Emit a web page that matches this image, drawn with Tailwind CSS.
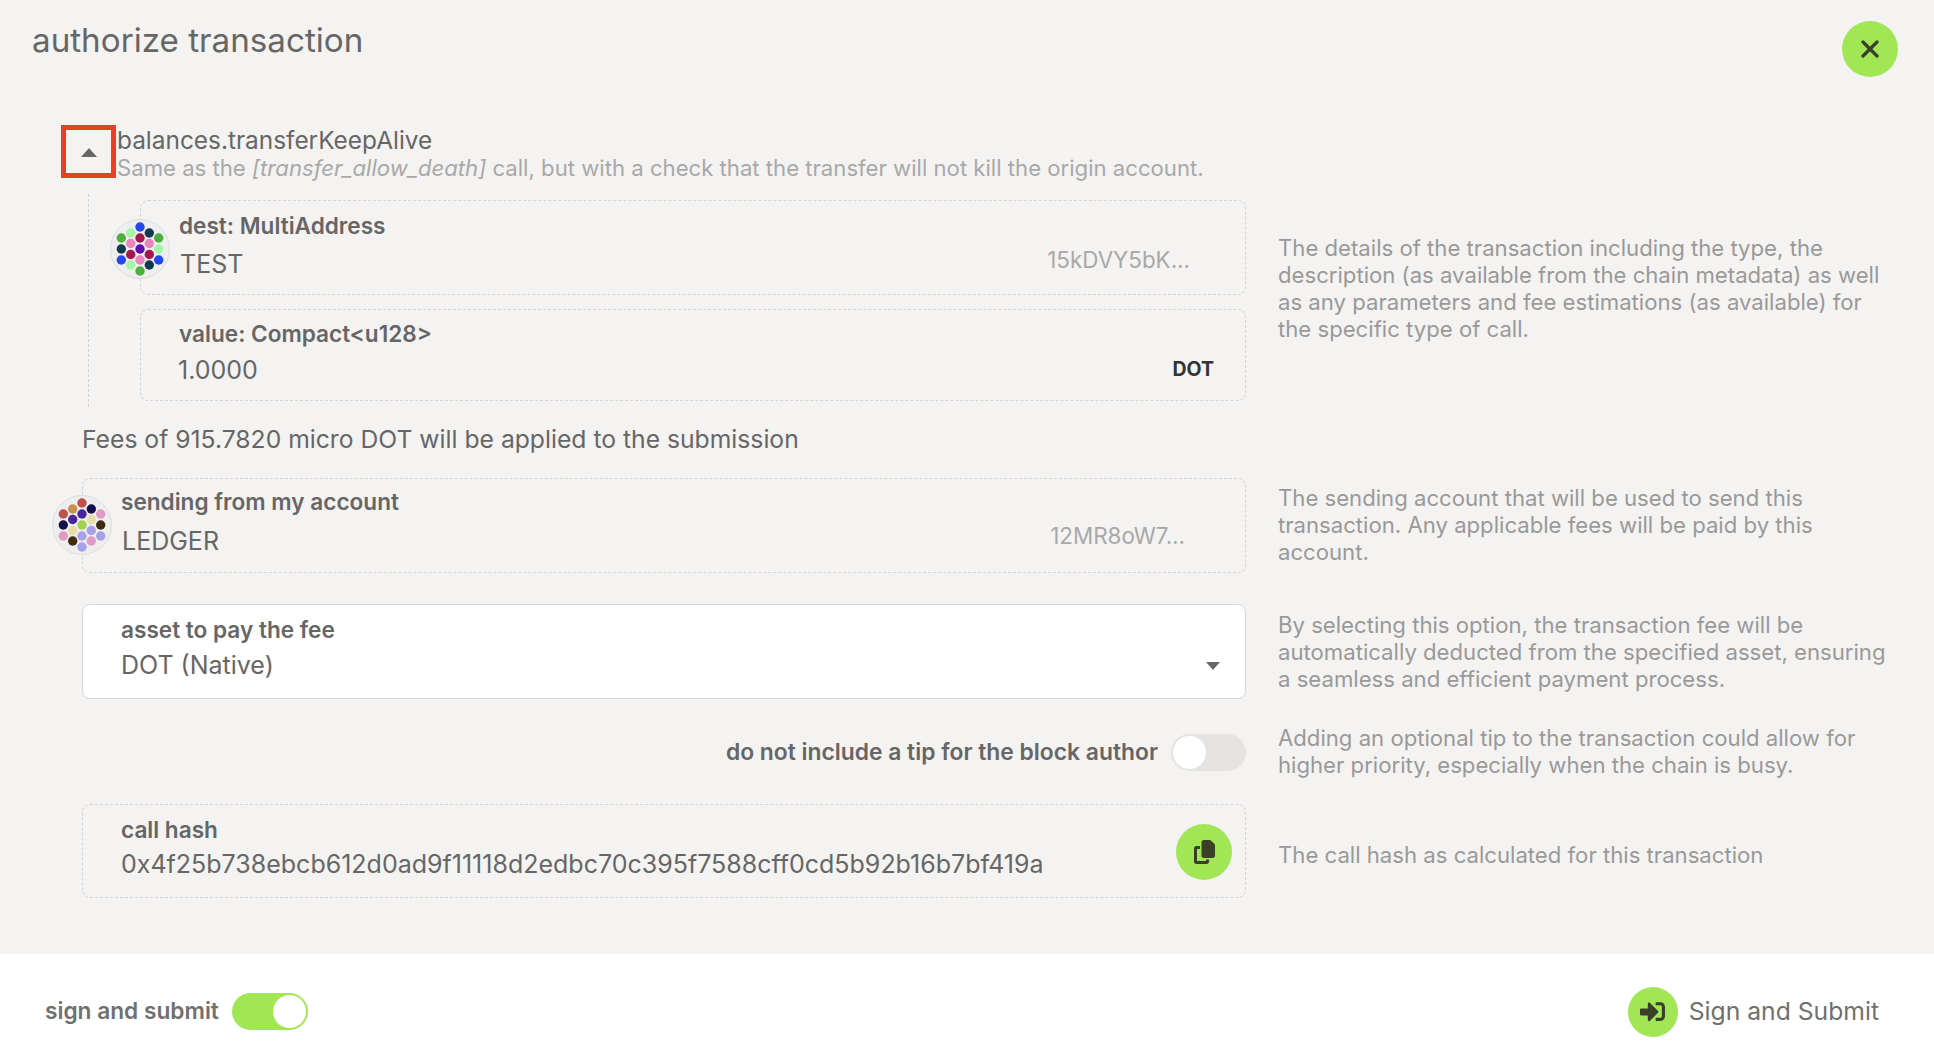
<!DOCTYPE html>
<html><head><meta charset="utf-8"><script src="https://cdn.jsdelivr.net/npm/@tailwindcss/browser@4"></script></head>
<body class="m-0">
<div class="w-[1934px] h-[1064px] overflow-hidden flex flex-col bg-[#f4f3f2] font-['Inter',sans-serif] text-[#666]">
  <div class="h-[125px] shrink-0 flex justify-between items-start">
    <h1 class="ml-[32px] mt-[18px] text-[33.2px] leading-[44px] font-normal">authorize transaction</h1>
    <button class="mt-[21px] mr-[36px] w-[56px] h-[56px] rounded-full bg-[#a0e655] flex items-center justify-center">
      <svg width="18" height="18" viewBox="0 0 18 18"><path d="M2 2L16 16M16 2L2 16" stroke="#3a4028" stroke-width="3.2" stroke-linecap="round"/></svg>
    </button>
  </div>

  <div class="flex gap-[32px] pl-[82px]">
    <div class="w-[1164px]">
      <div class="flex -ml-[21px] h-[53px]">
        <div class="w-[55px] h-[53px] shrink-0 border-[5px] border-[#ea3f24] flex items-center justify-center">
          <svg width="16" height="9" viewBox="0 0 16 9" class="mt-[2px] ml-[1px]"><path d="M8 0L16 9H0Z" fill="#666"/></svg>
        </div>
        <div class="ml-[1px]">
          <div class="text-[24.4px] leading-[30px] whitespace-nowrap">balances.transferKeepAlive</div>
          <div class="text-[22.15px] leading-[26px] text-[#a8a8a8] whitespace-nowrap">Same as the <i>[transfer_allow_death]</i> call, but with a check that the transfer will not kill the origin account.</div>
        </div>
      </div>
      <div class="mt-[16px] ml-[6px] w-[1158px] border-l border-dashed border-[#d0d0d0] pl-[51px] py-[6px] flex flex-col gap-[14px]">
        <div class="relative h-[95px] rounded-[8px] border border-dashed border-[#d4d4d4] pl-[38px]">
          <svg class="absolute -left-[31px] top-[18px]" width="60" height="60" viewBox="-30 -30 60 60">
            <circle r="29.5" fill="#eee" stroke="#ddd"/>
            <g>
              <circle cx="-18.7" cy="-11" r="4.7" fill="#4fae3f"/><circle cx="-18.7" cy="0" r="4.7" fill="#13394f"/><circle cx="-18.7" cy="11" r="4.7" fill="#2448f0"/>
              <circle cx="-9.3" cy="-16" r="4.7" fill="#a5f5a5"/><circle cx="-9.3" cy="-5.5" r="4.7" fill="#ec84bd"/><circle cx="-9.3" cy="5.5" r="4.7" fill="#a3174f"/><circle cx="-9.3" cy="16" r="4.7" fill="#a5f5a5"/>
              <circle cx="0" cy="-22" r="4.7" fill="#2448f0"/><circle cx="0" cy="-11" r="4.7" fill="#a3174f"/><circle cx="0" cy="0" r="4.7" fill="#5f0cb0"/><circle cx="0" cy="11" r="4.7" fill="#ec84bd"/><circle cx="0" cy="22" r="4.7" fill="#4fae3f"/>
              <circle cx="9.3" cy="-16" r="4.7" fill="#13394f"/><circle cx="9.3" cy="-5.5" r="4.7" fill="#ec84bd"/><circle cx="9.3" cy="5.5" r="4.7" fill="#a3174f"/><circle cx="9.3" cy="16" r="4.7" fill="#13394f"/>
              <circle cx="18.7" cy="-11" r="4.7" fill="#4fae3f"/><circle cx="18.7" cy="0" r="4.7" fill="#a5f5a5"/><circle cx="18.7" cy="11" r="4.7" fill="#2448f0"/>
            </g>
          </svg>
          <div class="pt-[11px] text-[22.6px] leading-[28px] font-semibold">dest: MultiAddress</div>
          <div class="mt-[8px] flex justify-between pr-[55px]"><span class="ml-[1px] text-[25px] leading-[32px]">TEST</span><span class="-mt-[4px] text-[22.4px] leading-[32px] text-[#a8a8a8]">15kDVY5bK...</span></div>
        </div>
        <div class="h-[92px] rounded-[8px] border border-dashed border-[#d4d4d4] pl-[38px]">
          <div class="pt-[10px] text-[22.6px] leading-[28px] font-semibold">value: Compact&lt;u128&gt;</div>
          <div class="mt-[6px] flex justify-between items-center pr-[31px]"><span class="-ml-[1px] text-[25px] leading-[32px]">1.0000</span><span class="text-[19.5px] font-bold text-[#333] leading-[32px] -mt-[2px]">DOT</span></div>
        </div>
      </div>
      <div class="mt-[16px] mb-[23px] text-[24.7px] leading-[32px] whitespace-nowrap">Fees of 915.7820 micro DOT will be applied to the submission</div>
    </div>
    <div class="w-[619px] pt-[110px] text-[22.15px] leading-[27px] text-[#999]">The details of the transaction including the type, the description (as available from the chain metadata) as well as any parameters and fee estimations (as available) for the specific type of call.</div>
  </div>

  <div class="flex gap-[32px] pl-[82px] mt-[0px]">
    <div class="relative w-[1164px] h-[95px] rounded-[8px] border border-dashed border-[#d4d4d4] pl-[38px]">
      <svg class="absolute -left-[31px] top-[16px]" width="60" height="60" viewBox="-30 -30 60 60">
        <circle r="29.5" fill="#eee" stroke="#ddd"/>
        <circle cx="-18.7" cy="-11" r="4.7" fill="#c0504a"/><circle cx="-18.7" cy="0" r="4.7" fill="#150f4a"/><circle cx="-18.7" cy="11" r="4.7" fill="#e09ac5"/>
        <circle cx="-9.3" cy="-16" r="4.7" fill="#c9914f"/><circle cx="-9.3" cy="-5.5" r="4.7" fill="#47259a"/><circle cx="-9.3" cy="5.5" r="4.7" fill="#e8dfa8"/><circle cx="-9.3" cy="16" r="4.7" fill="#3f2c10"/>
        <circle cx="0" cy="-22" r="4.7" fill="#c0504a"/><circle cx="0" cy="-11" r="4.7" fill="#47259a"/><circle cx="0" cy="0" r="4.7" fill="#9fd24f"/><circle cx="0" cy="11" r="4.7" fill="#a8a0e8"/><circle cx="0" cy="22" r="4.7" fill="#a8a0e8"/>
        <circle cx="9.3" cy="-16" r="4.7" fill="#150f4a"/><circle cx="9.3" cy="-5.5" r="4.7" fill="#e8dfa8"/><circle cx="9.3" cy="5.5" r="4.7" fill="#a8a0e8"/><circle cx="9.3" cy="16" r="4.7" fill="#e09ac5"/>
        <circle cx="18.7" cy="-11" r="4.7" fill="#e09ac5"/><circle cx="18.7" cy="0" r="4.7" fill="#3f2c10"/><circle cx="18.7" cy="11" r="4.7" fill="#a8a0e8"/>
      </svg>
      <div class="pt-[9px] text-[22.6px] leading-[28px] font-semibold">sending from my account</div>
      <div class="mt-[9px] flex justify-between pr-[60px]"><span class="ml-[1px] text-[25px] leading-[32px]">LEDGER</span><span class="-mt-[5px] text-[22.4px] leading-[32px] text-[#a8a8a8]">12MR8oW7...</span></div>
    </div>
    <div class="w-[619px] pt-[7px] text-[22.15px] leading-[27px] text-[#999]">The sending account that will be used to send this transaction. Any applicable fees will be paid by this account.</div>
  </div>

  <div class="flex gap-[32px] pl-[82px] mt-[31px]">
    <div class="relative w-[1164px] h-[95px] rounded-[8px] border border-[#d8d8d8] bg-white pl-[38px]">
      <div class="pt-[11px] text-[22.6px] leading-[28px] font-semibold">asset to pay the fee</div>
      <div class="mt-[5px] text-[25px] leading-[32px]">DOT (Native)</div>
      <svg class="absolute right-[25px] top-[57px]" width="14" height="8" viewBox="0 0 14 8"><path d="M0 0H14L7 8Z" fill="#666"/></svg>
    </div>
    <div class="w-[619px] pt-[8px] text-[22.15px] leading-[27px] text-[#999]">By selecting this option, the transaction fee will be automatically deducted from the specified asset, ensuring a seamless and efficient payment process.</div>
  </div>

  <div class="flex gap-[32px] pl-[82px] mt-[26px]">
    <div class="w-[1164px] flex items-center justify-end gap-[13px]">
      <span class="text-[22.85px] font-semibold whitespace-nowrap">do not include a tip for the block author</span>
      <div class="w-[75px] h-[37px] rounded-full bg-[#e4e3e2] p-[2px] flex"><div class="w-[33px] h-[33px] rounded-full bg-white"></div></div>
    </div>
    <div class="w-[619px] text-[22.15px] leading-[27px] text-[#999]">Adding an optional tip to the transaction could allow for higher priority, especially when the chain is busy.</div>
  </div>

  <div class="flex gap-[32px] pl-[82px] mt-[25px]">
    <div class="relative w-[1164px] h-[94px] rounded-[8px] border border-dashed border-[#d4d4d4] pl-[38px]">
      <div class="pt-[11px] text-[22.6px] leading-[28px] font-semibold">call hash</div>
      <div class="mt-[4px] text-[25px] leading-[32px] whitespace-nowrap">0x4f25b738ebcb612d0ad9f11118d2edbc70c395f7588cff0cd5b92b16b7bf419a</div>
      <button class="absolute right-[13px] top-[19px] w-[56px] h-[56px] rounded-full bg-[#a0e655] flex items-center justify-center">
        <svg width="21" height="24" viewBox="0 0 448 512"><path fill="#3a4028" d="M208 0H332.1c12.7 0 24.9 5.1 33.9 14.1l67.9 67.9c9 9 14.1 21.2 14.1 33.9V336c0 26.5-21.5 48-48 48H208c-26.5 0-48-21.5-48-48V48c0-26.5 21.5-48 48-48zM48 128h80v64H64V448H256V416h64v48c0 26.5-21.5 48-48 48H48c-26.5 0-48-21.5-48-48V176c0-26.5 21.5-48 48-48z"/></svg>
      </button>
    </div>
    <div class="w-[619px] pt-[38px] text-[22.15px] leading-[27px] text-[#999]">The call hash as calculated for this transaction</div>
  </div>

  <div class="mt-auto h-[110px] bg-white flex items-center justify-between pl-[45px] pr-[55px] pt-[5px]">
    <div class="flex items-center gap-[13px]">
      <span class="text-[22.7px] font-semibold text-[#707070]">sign and submit</span>
      <div class="w-[76px] h-[37px] rounded-full bg-[#a0e655] p-[2px] flex justify-end"><div class="w-[33px] h-[33px] rounded-full bg-white"></div></div>
    </div>
    <div class="flex items-center gap-[11px]">
      <button class="w-[50px] h-[50px] rounded-full bg-[#a0e655] flex items-center justify-center">
        <svg width="25" height="25" viewBox="0 0 512 512"><path fill="#3a4028" d="M416 448h-84c-6.6 0-12-5.4-12-12v-40c0-6.6 5.4-12 12-12h84c17.7 0 32-14.3 32-32V160c0-17.7-14.3-32-32-32h-84c-6.6 0-12-5.4-12-12V76c0-6.6 5.4-12 12-12h84c53 0 96 43 96 96v192c0 53-43 96-96 96zm-47-201L201 79c-15-15-41-4.5-41 17v96H24c-13.3 0-24 10.7-24 24v96c0 13.3 10.7 24 24 24h136v96c0 21.5 26 32 41 17l168-168c9.3-9.4 9.3-24.6 0-34z"/></svg>
      </button>
      <span class="text-[24.7px] text-[#707070]">Sign and Submit</span>
    </div>
  </div>
</div>
</body></html>
